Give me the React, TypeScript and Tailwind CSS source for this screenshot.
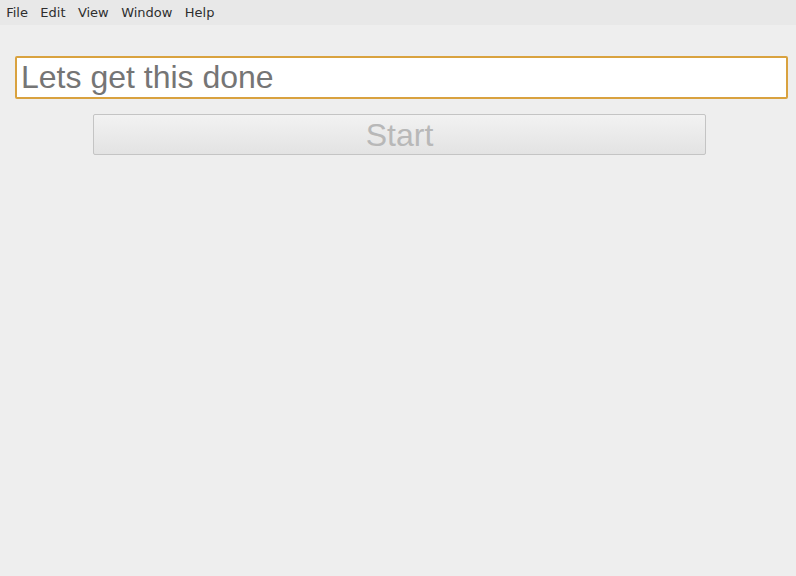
export default function App() {
  const menus = ["File", "Edit", "View", "Window", "Help"];

  return (
    <div className="min-h-[576px] w-full bg-[#eeeeee]">
      {/* Menu bar */}
      <div className="flex h-[25px] items-center bg-[#e8e8e8] font-['DejaVu_Sans',sans-serif] text-[13px] text-[#2e2e2e]">
        {menus.map((m) => (
          <span key={m} className="px-[6.2px] leading-[25px]">
            {m}
          </span>
        ))}
      </div>

      <div className="flex flex-col pt-[31px]">
        <div className="ml-[15px] mr-[8px] h-[43px] rounded-[2px] border-2 border-[#d9a23f] bg-white pl-[4px] font-['Liberation_Sans',sans-serif] text-[32px] leading-[38px] text-[#757575]">
          Lets get this done
        </div>

        <div className="mt-[15px] ml-[93px] flex h-[41px] w-[613px] items-center justify-center rounded-[2px] border border-[#c4c4c4] bg-gradient-to-b from-[#f2f2f2] to-[#e3e3e3] font-['Liberation_Sans',sans-serif] text-[32px] text-[#b8b8b8]">
          Start
        </div>
      </div>
    </div>
  );
}
